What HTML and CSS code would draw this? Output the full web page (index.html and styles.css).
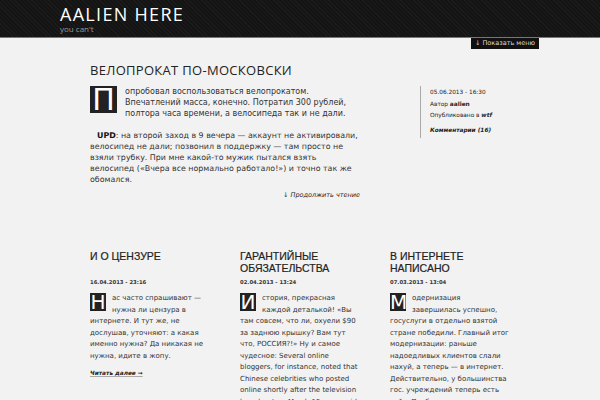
FILE: index.html
```html
<!DOCTYPE html>
<html lang="ru">
<head>
<meta charset="utf-8">
<link rel="stylesheet" href="styles.css">
</head>
<body>
<header class="topbar">
  <div class="topbar-inner">
    <div class="site-title">AALIEN HERE</div>
    <div class="site-tagline">you can't</div>
  </div>
</header>
<div class="menu-row">
  <span class="menu-tab">↓ Показать меню</span>
</div>
<main class="wrap">
  <article class="post">
    <div class="post-main">
      <h1 class="post-title">ВЕЛОПРОКАТ ПО-МОСКОВСКИ</h1>
      <p class="lead"><span class="dropcap">П</span>опробовал воспользоваться велопрокатом. Впечатлений масса, конечно. Потратил 300 рублей, полтора часа времени, а велосипеда так и не дали.</p>
      <p class="indent"><b>UPD</b>: на второй заход в 9 вечера — аккаунт не активировали,<br>велосипед не дали; позвонил в поддержку — там просто не<br>взяли трубку. При мне какой-то мужик пытался взять<br>велосипед («Вчера все нормально работало!») и точно так же<br>обомался.</p>
      <div class="more">↓ Продолжить чтение</div>
    </div>
    <aside class="meta">
      <div>05.06.2013 - 16:30</div>
      <div>Автор <b>aalien</b></div>
      <div>Опубликовано в <b><i>wtf</i></b></div>
      <div class="comments">Комментарии (16)</div>
    </aside>
  </article>
  <section class="cols">
    <div class="col">
      <h2 class="col-title">И О ЦЕНЗУРЕ</h2>
      <div class="col-date">16.04.2013 - 23:16</div>
      <p class="col-text"><span class="dropcap small">Н</span>ас часто спрашивают — нужна ли цензура в интернете. И тут же, не дослушав, уточняют: а какая именно нужна? Да никакая не нужна, идите в жопу.</p>
      <div class="read-more">Читать далее →</div>
    </div>
    <div class="col">
      <h2 class="col-title">ГАРАНТИЙНЫЕ ОБЯЗАТЕЛЬСТВА</h2>
      <div class="col-date">02.04.2013 - 13:24</div>
      <p class="col-text"><span class="dropcap small">И</span>стория, прекрасная каждой деталькой! «Вы там совсем, что ли, охуели $90 за заднюю крышку? Вам тут что, РОССИЯ?!» Ну и самое чудесное: Several online bloggers, for instance, noted that Chinese celebrities who posted online shortly after the television broadcast on March 15 were paid</p>
    </div>
    <div class="col">
      <h2 class="col-title">В ИНТЕРНЕТЕ НАПИСАНО</h2>
      <div class="col-date">07.03.2013 - 13:04</div>
      <p class="col-text"><span class="dropcap small">М</span>одернизация завершилась успешно, госуслуги в отдельно взятой стране победили. Главный итог модернизации: раньше надоедливых клиентов слали нахуй, а теперь — в интернет. Действительно, у большинства гос. учреждений теперь есть сайт. Проблема в том, что</p>
    </div>
  </section>
</main>
</body>
</html>
```

FILE: styles.css
```css
* { box-sizing: border-box; }
html, body { margin: 0; padding: 0; }
body {
  background: #f2f2f2;
  color: #333;
  font-family: "DejaVu Sans", Verdana, sans-serif;
  width: 600px;
  height: 400px;
  overflow: hidden;
}
.topbar {
  background-color: #141414;
  background-image: repeating-linear-gradient(45deg, rgba(255,255,255,0.03) 0 1px, transparent 1px 3px);
  height: 38px;
  border-bottom: 1px solid #777;
}
.topbar-inner {
  width: 480px;
  margin: 0 auto;
  padding-top: 4px;
}
.site-title {
  font-family: "Open Sans", sans-serif;
  font-stretch: normal;
  font-size: 18px;
  line-height: 20px;
  letter-spacing: 1.3px;
  color: #fff;
}
.site-tagline {
  font-family: "Open Sans", sans-serif;
  font-size: 8px;
  line-height: 10px;
  color: #999;
}
.menu-row {
  width: 480px;
  height: 11px;
  margin: 0 auto;
  display: flex;
  justify-content: flex-end;
}
.menu-tab {
  background: #111;
  color: #ddd;
  font-size: 6.5px;
  line-height: 10px;
  padding: 0 4px;
  margin-right: 1px;
}
.wrap {
  width: 420px;
  margin: 0 auto;
}
.post {
  display: grid;
  grid-template-columns: 270px 90px;
  column-gap: 60px;
  margin-top: 13px;
}
.post-title {
  font-family: "Open Sans", sans-serif;
  font-stretch: normal;
  font-weight: normal;
  font-size: 13px;
  line-height: 16px;
  letter-spacing: 0.3px;
  color: #222;
  margin: 0 0 8px;
}
.post-main p {
  font-size: 8px;
  line-height: 11px;
  margin: 0 0 11px;
  color: #333;
}
.post-main p.indent {
  font-size: 7.9px;
  margin-bottom: 5px;
  text-indent: 7px;
  white-space: nowrap;
}
.post-main p b { color: #111; }
.dropcap {
  float: left;
  background: #222;
  color: #fff;
  font-size: 30px;
  line-height: 27px;
  width: 27px;
  height: 27px;
  text-align: center;
  margin: 0 8px 0 0;
}
.dropcap.small {
  font-size: 20px;
  line-height: 18px;
  width: 16px;
  height: 18px;
  margin: 0 6px 0 0;
}
.more {
  text-align: right;
  font-size: 6.5px;
  line-height: 10px;
  font-style: italic;
  color: #222;
}
.meta {
  border-left: 1px solid #aaa;
  margin-top: 24px;
  padding: 1px 0 2px 9px;
  font-size: 5.8px;
  line-height: 11.5px;
  color: #222;
  align-self: start;
}
.meta .comments { margin-top: 3px; font-weight: bold; font-style: italic; }
.cols {
  display: grid;
  grid-template-columns: repeat(3, 120px);
  column-gap: 30px;
  margin-top: 50px;
}
.col-title {
  font-family: "Liberation Sans", Arial, sans-serif;
  font-weight: normal;
  font-size: 10.5px;
  line-height: 12px;
  min-height: 24px;
  color: #222;
  margin: 0 0 4px;
  -webkit-text-stroke: 0.2px #222;
}
.col-date {
  font-size: 5.3px;
  line-height: 8px;
  font-weight: bold;
  color: #333;
  margin-bottom: 7px;
}
.col-text {
  font-size: 7px;
  line-height: 11.5px;
  margin: 0 0 6px;
  color: #333;
}
.read-more {
  font-size: 5.8px;
  line-height: 10px;
  font-weight: bold;
  font-style: italic;
  color: #222;
  text-decoration: underline;
  text-decoration-color: #aaa;
}
```
